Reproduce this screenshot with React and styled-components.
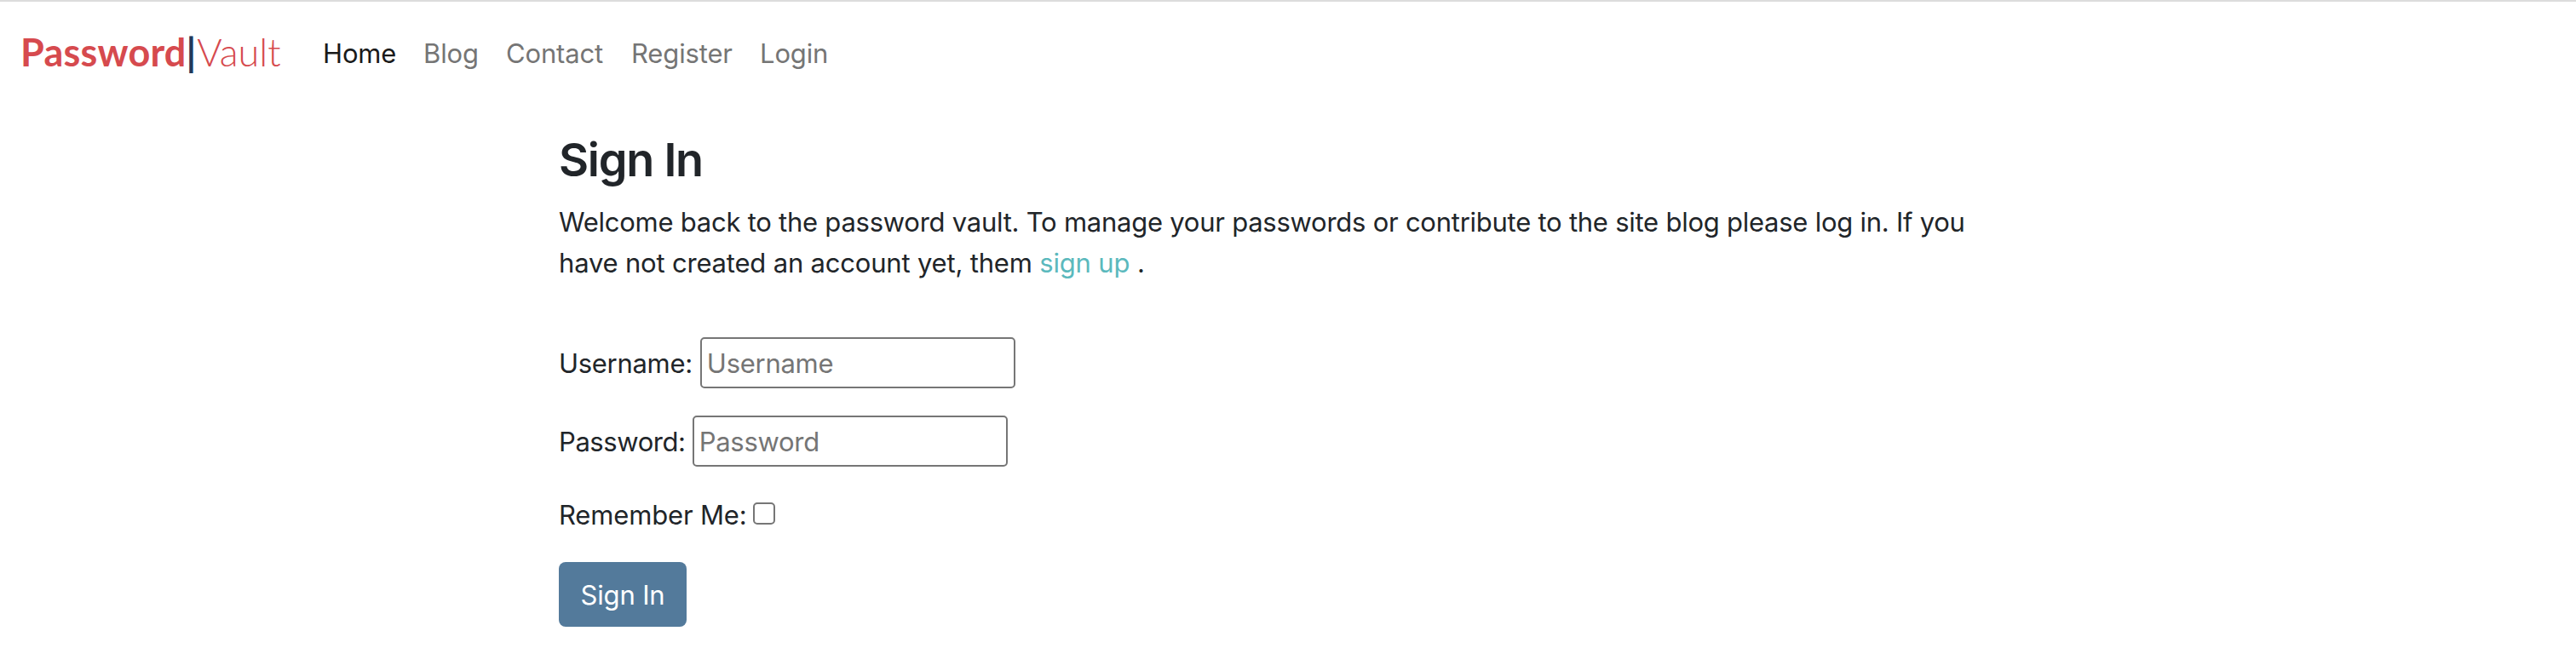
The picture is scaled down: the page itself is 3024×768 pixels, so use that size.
import React from "react";
import styled, { createGlobalStyle } from "styled-components";

const GlobalStyle = createGlobalStyle`
  *, *::before, *::after { box-sizing: border-box; }
  body {
    margin: 0;
    background: #fff;
    color: #212529;
    font: 400 31px/48px Inter, "Liberation Sans", sans-serif;
  }
`;

const Page = styled.div`
  min-height: 768px;
  border-top: 2px solid #dcdcdc;
`;

const Navbar = styled.nav`
  display: flex;
  align-items: flex-start;
  padding: 32px 24px 0;
  height: 152px;
`;

const Brand = styled.a`
  display: flex;
  width: 339px;
  font: 700 45px/54px Lato, sans-serif;
  letter-spacing: 0.22px;
  color: #d64a4e;
  text-decoration: none;
`;

const Divider = styled.span`
  color: #23395b;
  letter-spacing: 0;
`;

const BrandLight = styled.span`
  margin-left: 1px;
  font-weight: 300;
  letter-spacing: 0;
`;

const NavList = styled.ul`
  display: flex;
  margin: 5px 0 0;
  padding: 0;
  list-style: none;
`;

const NavItem = styled.li`
  width: ${(p) => p.$width}px;
  padding: 0 16px;
`;

const NavLink = styled.a`
  color: ${(p) => (p.$active ? "#1a1a1a" : "#757575")};
  letter-spacing: -0.15px;
  text-decoration: none;
`;

const Main = styled.main`
  width: 1712px;
  margin: 0 auto;
`;

const Title = styled.h2`
  margin: 0 0 16px;
  font-size: 54px;
  line-height: 67px;
  font-weight: 600;
  letter-spacing: -1.25px;
`;

const Intro = styled.p`
  margin: 0 0 63px;
  letter-spacing: -0.25px;
`;

const IntroEnd = styled.span`
  letter-spacing: -0.19px;
`;

const SignUpLink = styled.a`
  color: #5bb9bd;
  letter-spacing: -0.15px;
  text-decoration: none;
`;

const Field = styled.div`
  display: flex;
  align-items: center;
  gap: ${(p) => p.$gap}px;
  height: ${(p) => p.$height ?? 60}px;
  margin-bottom: ${(p) => p.$space ?? 32}px;
`;

const Label = styled.label`
  padding-top: 2px;
  letter-spacing: ${(p) => p.$tracking}px;
`;

const TextInput = styled.input`
  width: 370px;
  height: 60px;
  padding: 0 6px;
  border: 2px solid #767676;
  border-radius: 5px;
  background: #fff;
  font: inherit;
  letter-spacing: -0.27px;
  &::placeholder { color: #757575; opacity: 1; }
`;

const Checkbox = styled.input`
  appearance: none;
  width: 26px;
  height: 26px;
  margin: 0 0 3px;
  border: 2px solid #767676;
  border-radius: 5px;
  background: #fff;
`;

const SubmitButton = styled.button`
  display: block;
  width: 150px;
  height: 76px;
  padding: 2px 0 0;
  border: 0;
  border-radius: 8px;
  background: #537a9b;
  color: #fff;
  font: inherit;
  letter-spacing: -0.15px;
`;

const links = [
  { name: "Home", width: 118, active: true },
  { name: "Blog", width: 97 },
  { name: "Contact", width: 147 },
  { name: "Register", width: 151 },
  { name: "Login", width: 112 },
];

export default function App() {
  return (
    <Page>
      <GlobalStyle />
      <Navbar>
        <Brand>
          Password<Divider>|</Divider>
          <BrandLight>Vault</BrandLight>
        </Brand>
        <NavList>
          {links.map((l) => (
            <NavItem key={l.name} $width={l.width}>
              <NavLink $active={l.active}>{l.name}</NavLink>
            </NavItem>
          ))}
        </NavList>
      </Navbar>
      <Main>
        <Title>Sign In</Title>
        <Intro>
          Welcome back to the password vault. To manage your passwords or
          contribute to the site blog please log in. If you{" "}
          <IntroEnd>
            have not created an account yet, them{" "}
            <SignUpLink>sign up</SignUpLink> .
          </IntroEnd>
        </Intro>
        <form>
          <Field $gap={9}>
            <Label htmlFor="username" $tracking={-0.3}>Username:</Label>
            <TextInput id="username" placeholder="Username" />
          </Field>
          <Field $gap={8} $space={27}>
            <Label htmlFor="password" $tracking={-0.42}>Password:</Label>
            <TextInput id="password" type="password" placeholder="Password" />
          </Field>
          <Field $gap={8} $height={58} $space={27}>
            <Label htmlFor="remember" $tracking={-0.16}>Remember Me:</Label>
            <Checkbox id="remember" type="checkbox" />
          </Field>
          <SubmitButton type="button">Sign In</SubmitButton>
        </form>
      </Main>
    </Page>
  );
}
